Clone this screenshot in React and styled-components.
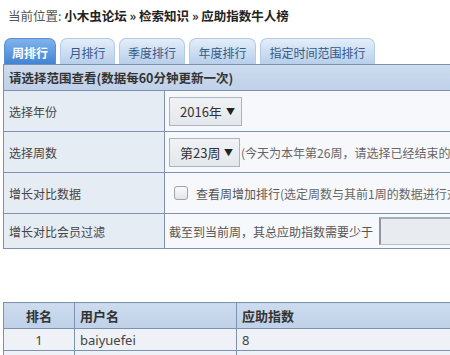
import styled, { createGlobalStyle } from "styled-components";

const GlobalStyle = createGlobalStyle`
  html, body {
    margin: 0;
    padding: 0;
    overflow: hidden;
    background: #ffffff;
  }
  body {
    font-family: "Noto Sans CJK SC", "Noto Sans", sans-serif;
    font-size: 12px;
    color: #333;
  }
`;

const Page = styled.div`
  width: 640px;
  padding: 6px 0 0 3px;
`;

const Breadcrumb = styled.div`
  padding-left: 5px;
  height: 20px;
  line-height: 20px;
  font-size: 12.5px;
  color: #555;
  b {
    color: #222;
    font-weight: bold;
  }
`;

const Tabs = styled.div`
  display: flex;
  gap: 4px;
  margin-top: 12px;
  padding-left: 1px;
  height: 26px;
`;

const Tab = styled.div`
  width: ${(p) => p.$w}px;
  height: 26px;
  box-sizing: border-box;
  border-radius: 7px 7px 0 0;
  display: flex;
  align-items: center;
  justify-content: center;
  font-size: 12px;
  padding-top: 2px;
  color: ${(p) => (p.$active ? "#fff" : "#345a8a")};
  font-weight: ${(p) => (p.$active ? "bold" : "normal")};
  background: ${(p) =>
    p.$active
      ? "linear-gradient(#7fb4ec, #4383d4)"
      : "linear-gradient(#e3eefa, #b7cfea)"};
  border: 1px solid ${(p) => (p.$active ? "#5b8fd0" : "#b3cbe6")};
  border-bottom: none;
`;

const Form = styled.div`
  display: grid;
  grid-template-columns: 161px 1fr;
  border: 1px solid #7d92b1;
  border-right: none;
`;

const FormHead = styled.div`
  grid-column: 1 / -1;
  height: 25px;
  line-height: 25px;
  padding-left: 5px;
  font-size: 12.5px;
  font-weight: bold;
  color: #333;
  background: linear-gradient(#cddcee, #bfd1e8);
  border-bottom: 1px solid #7d92b1;
`;

const Label = styled.div`
  height: ${(p) => p.$h}px;
  display: flex;
  align-items: center;
  padding-left: 5px;
  background: #e6ecf4;
  color: #444;
  border-right: 1px solid #7d92b1;
  border-bottom: ${(p) => (p.$last ? "none" : "1px solid #7d92b1")};
`;

const Cell = styled.div`
  height: ${(p) => p.$h}px;
  display: flex;
  align-items: center;
  padding-left: 4px;
  background: #f7f8fb;
  color: #555;
  white-space: nowrap;
  overflow: hidden;
  border-bottom: ${(p) => (p.$last ? "none" : "1px solid #7d92b1")};
`;

const Select = styled.div`
  width: ${(p) => p.$w}px;
  height: 29px;
  box-sizing: border-box;
  margin-right: 1px;
  display: flex;
  align-items: center;
  justify-content: space-between;
  padding: 0 6px 0 10px;
  border: 1px solid #aab5c4;
  background: linear-gradient(#f0f2f5, #e3e7ec);
  color: #333;
  font-size: 13px;
  span {
    font-size: 9px;
    color: #222;
  }
`;

const Check = styled.div`
  width: 12px;
  height: 12px;
  margin: 0 8px 0 5px;
  border: 1px solid #9aa3ae;
  border-radius: 3px;
  background: linear-gradient(#fafafa, #e2e4e7);
`;

const Note = styled.span`
  color: #666;
`;

const Input = styled.div`
  width: 120px;
  height: 28px;
  margin-left: 6px;
  box-sizing: border-box;
  border: 1px solid #b9c3cf;
  border-left: 2px solid #8d97a3;
  border-top: 2px solid #a4adb8;
  background: #e8ecf1;
`;

const Ranking = styled.table`
  margin-top: 53px;
  border-collapse: collapse;
  width: 640px;
  th, td {
    border: 1px solid #7d92b1;
    padding: 0 5px;
    text-align: left;
  }
  th {
    height: 25px;
    background: linear-gradient(#cddcee, #bfd1e8);
    color: #333;
    font-size: 13px;
  }
  td {
    height: 21px;
    background: #eef1f6;
    color: #444;
    font-size: 13px;
    font-family: "Noto Sans", "Noto Sans CJK SC", sans-serif;
  }
  th:first-child, td:first-child {
    width: 60px;
    text-align: center;
  }
  th:nth-child(2) {
    width: 151px;
  }
`;

export default function App() {
  return (
    <Page>
      <GlobalStyle />
      <Breadcrumb>
        当前位置: <b>小木虫论坛 » 检索知识 » 应助指数牛人榜</b>
      </Breadcrumb>
      <Tabs>
        <Tab $w={52} $active>周排行</Tab>
        <Tab $w={55}>月排行</Tab>
        <Tab $w={66}>季度排行</Tab>
        <Tab $w={67}>年度排行</Tab>
        <Tab $w={115}>指定时间范围排行</Tab>
      </Tabs>
      <Form>
        <FormHead>请选择范围查看(数据每60分钟更新一次)</FormHead>
        <Label $h={40}>选择年份</Label>
        <Cell $h={40}>
          <Select $w={73}>2016年<span>▼</span></Select>
        </Cell>
        <Label $h={40}>选择周数</Label>
        <Cell $h={40}>
          <Select $w={71}>第23周<span>▼</span></Select>
          <Note>(今天为本年第26周，请选择已经结束的完整周进行查看)</Note>
        </Cell>
        <Label $h={40}>增长对比数据</Label>
        <Cell $h={40}>
          <Check />
          <span>查看周增加排行</span>
          <Note>(选定周数与其前1周的数据进行对比)</Note>
        </Cell>
        <Label $h={34} $last>增长对比会员过滤</Label>
        <Cell $h={34} $last>
          <span>截至到当前周，其总应助指数需要少于</span>
          <Input />
        </Cell>
      </Form>
      <Ranking>
        <thead>
          <tr>
            <th>排名</th>
            <th>用户名</th>
            <th>应助指数</th>
          </tr>
        </thead>
        <tbody>
          <tr>
            <td>1</td>
            <td>baiyuefei</td>
            <td>8</td>
          </tr>
          <tr>
            <td>2</td>
            <td>xiaomuchong</td>
            <td>6</td>
          </tr>
        </tbody>
      </Ranking>
    </Page>
  );
}
